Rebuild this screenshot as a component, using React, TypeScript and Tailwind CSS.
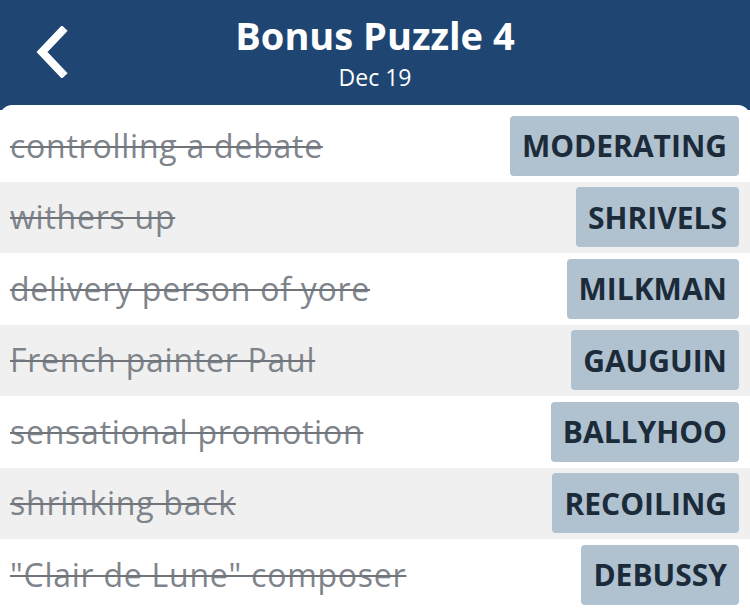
import React from "react";

type Clue = { clue: string; answer: string };

const clues: Clue[] = [
  { clue: "controlling a debate", answer: "MODERATING" },
  { clue: "withers up", answer: "SHRIVELS" },
  { clue: "delivery person of yore", answer: "MILKMAN" },
  { clue: "French painter Paul", answer: "GAUGUIN" },
  { clue: "sensational promotion", answer: "BALLYHOO" },
  { clue: "shrinking back", answer: "RECOILING" },
  { clue: "\"Clair de Lune\" composer", answer: "DEBUSSY" },
];

const App = () => {
  return (
    <div className="w-[750px] h-[613px] overflow-hidden bg-[#1f4672] font-['Open_Sans',sans-serif]">
      <header className="relative h-[105px] flex flex-col items-center text-white">
        <button className="absolute left-[31px] top-[26px] w-[40px] h-[52px] flex items-center justify-center">
          <svg viewBox="0 0 40 52" className="w-[40px] h-[52px]" fill="none">
            <path
              d="M31 5 L11 26 L31 47"
              stroke="white"
              strokeWidth={8}
              strokeLinecap="square"
              strokeLinejoin="miter"
            />
          </svg>
        </button>
        <h1 className="mt-[11px] text-[38px] leading-[48px] font-bold">
          Bonus Puzzle 4
        </h1>
        <p className="mt-[3px] text-[23px] leading-[30px]">Dec 19</p>
      </header>

      <main className="bg-white rounded-t-[12px] pt-[5px] h-[508px]">
        {clues.map((c, i) => (
          <div
            key={c.answer}
            className={
              "h-[71.5px] flex items-center justify-between pl-[10px] pr-[11px] " +
              (i % 2 === 1 ? "bg-[#f0f0f0]" : "bg-white")
            }
          >
            <span className="text-[32px] tracking-[0.75px] text-[#7e848a] line-through decoration-[2px] decoration-[#6f757b]">
              {c.clue}
            </span>
            <span className="h-[60px] flex items-center px-[12px] rounded-[4px] bg-[#b0c1cf] text-[#1c2b3a] text-[30px] font-bold">
              {c.answer}
            </span>
          </div>
        ))}
      </main>
    </div>
  );
};

export default App;
